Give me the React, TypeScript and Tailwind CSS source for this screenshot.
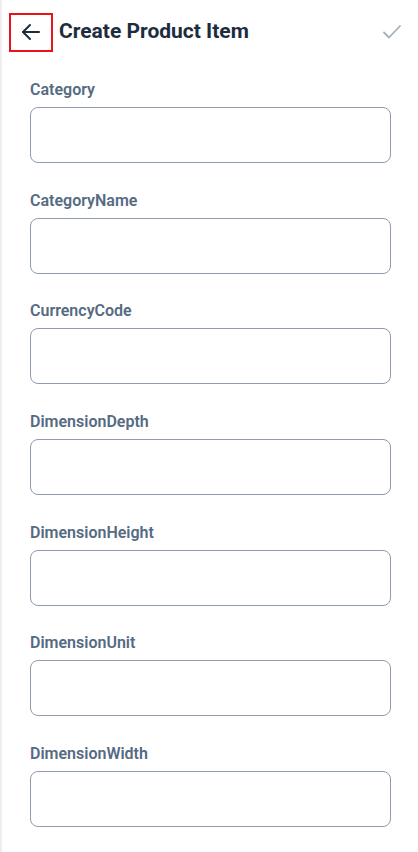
import { useState } from "react";

const fields = [
  "Category",
  "CategoryName",
  "CurrencyCode",
  "DimensionDepth",
  "DimensionHeight",
  "DimensionUnit",
  "DimensionWidth",
];

function Field({ label }: { label: string }) {
  const [value, setValue] = useState("");
  return (
    <div className="flex flex-col">
      <label className="text-[16px] font-semibold leading-[18px] text-[#556b82] mb-[8px]">{label}</label>
      <input
        value={value}
        onChange={(e) => setValue(e.target.value)}
        className="h-[56px] w-full rounded-[8px] border border-[#8e9cab] bg-white px-3 text-[15px] text-[#1d2d3e] outline-none"
      />
    </div>
  );
}

export default function App() {
  return (
    <div
      className="min-h-[852px] w-[418px] bg-white border-l-2 border-[#eeeeee]"
      style={{ fontFamily: "Roboto, 'Liberation Sans', sans-serif" }}
    >
      <header className="flex h-[64px] items-center pl-[7px] pr-[16px]">
        <button className="flex h-[39px] w-[44px] items-center justify-center border-2 border-[#e8141b]">
          <svg width="20" height="18" viewBox="0 0 20 18" fill="none" stroke="#1d2d3e" strokeWidth="2" strokeLinecap="round" strokeLinejoin="round">
            <path d="M18 9H2" />
            <path d="M9 2L2 9l7 7" />
          </svg>
        </button>
        <h1 className="ml-[6px] flex-1 text-[21px] font-bold text-[#1d2d3e]">Create Product Item</h1>
        <svg width="20" height="16" viewBox="0 0 20 16" fill="none" stroke="#a6b0ba" strokeWidth="1.8" strokeLinecap="round" strokeLinejoin="round">
          <path d="M2 8.5l5 5L18 2" />
        </svg>
      </header>
      <div className="flex flex-col gap-[28.67px] pl-[28px] pr-[27px] pt-[17px]">
        {fields.map((f) => (
          <Field key={f} label={f} />
        ))}
      </div>
    </div>
  );
}
